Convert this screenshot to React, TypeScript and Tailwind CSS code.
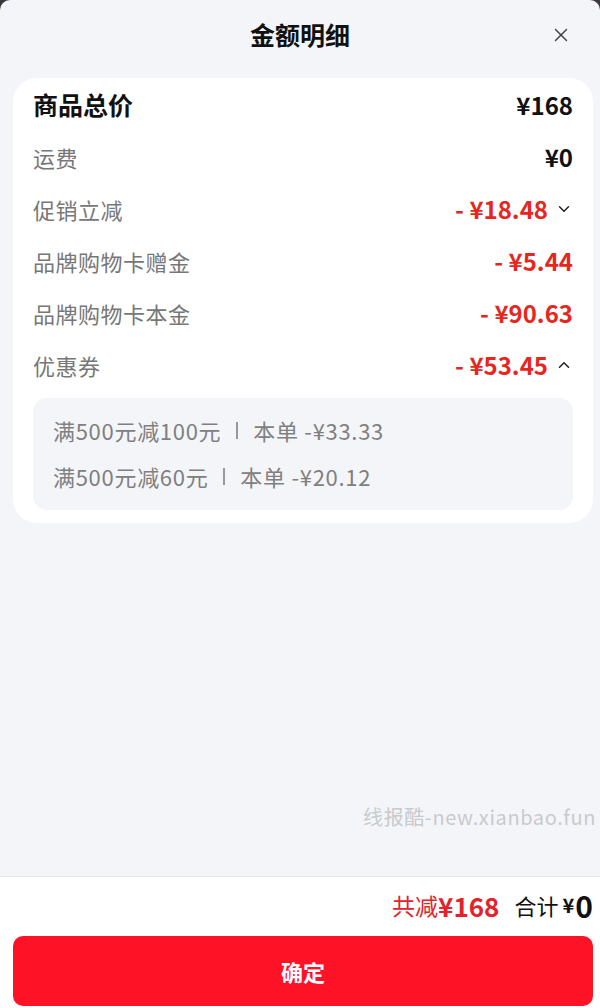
import { ChevronDown, ChevronUp, X } from "lucide-react";

const font = { fontFamily: '"Noto Sans CJK SC", "Noto Sans", sans-serif' };

type Row = {
  label: string;
  value: string;
  red?: boolean;
  arrow?: "down" | "up";
};

const rows: Row[] = [
  { label: "运费", value: "¥0" },
  { label: "促销立减", value: "- ¥18.48", red: true, arrow: "down" },
  { label: "品牌购物卡赠金", value: "- ¥5.44", red: true },
  { label: "品牌购物卡本金", value: "- ¥90.63", red: true },
  { label: "优惠券", value: "- ¥53.45", red: true, arrow: "up" },
];

const coupons = [
  { rule: "满500元减100元", amount: "本单 -¥33.33" },
  { rule: "满500元减60元", amount: "本单 -¥20.12" },
];

export default function App() {
  return (
    <div className="bg-[#3a3a3a] h-[1008px] w-[600px]" style={font}>
      <div className="flex h-full flex-col overflow-hidden rounded-t-[10px] bg-[#f4f5f8]">
        {/* Header */}
        <div className="relative flex h-[72px] items-center justify-center pb-[2px]">
          <h1 className="text-[25px] font-bold text-[#111]">金额明细</h1>
          <X className="absolute right-[28px] top-[24px] h-[22px] w-[22px] text-[#444]" strokeWidth={1.6} />
        </div>

        {/* Card */}
        <div className="ml-[13px] mr-[7px] mt-[6px] rounded-[24px] bg-white pb-[13px] pl-[20px] pr-[20px] pt-[10px]">
          <div className="flex h-[34px] items-center justify-between">
            <span className="text-[25px] font-bold text-[#111]">商品总价</span>
            <span className="text-[24px] font-bold text-[#111]">¥168</span>
          </div>
          {rows.map((r) => (
            <div key={r.label} className="mt-[18px] flex h-[34px] items-center justify-between">
              <span className="text-[22px] tracking-[0.5px] text-[#777]">{r.label}</span>
              <div className="flex items-center">
                <span
                  className={
                    r.red
                      ? "text-[24px] font-bold text-[#e6271f]"
                      : "text-[24px] font-bold text-[#111]"
                  }
                >
                  {r.value}
                </span>
                {r.arrow === "down" && (
                  <ChevronDown className="ml-[7px] h-[18px] w-[18px] text-[#222]" strokeWidth={2} />
                )}
                {r.arrow === "up" && (
                  <ChevronUp className="ml-[7px] h-[18px] w-[18px] text-[#222]" strokeWidth={2} />
                )}
              </div>
            </div>
          ))}

          <div className="mt-[16px] rounded-[14px] bg-[#f4f5f8] px-[20px] pb-[18px] pt-[16px]">
            {coupons.map((c, i) => (
              <div
                key={c.rule}
                className={
                  i === 0
                    ? "flex h-[32px] items-center text-[22px] tracking-[0.7px] text-[#808080]"
                    : "mt-[14px] flex h-[32px] items-center text-[22px] tracking-[0.7px] text-[#808080]"
                }
              >
                <span>{c.rule}</span>
                <span className="mx-[15px] h-[17px] w-[2px] bg-[#999]" />
                <span>{c.amount}</span>
              </div>
            ))}
          </div>
        </div>

        <div className="flex-1" />

        {/* Watermark */}
        <div className="mb-[44px] pr-[4px] text-right text-[20px] tracking-[0.6px] text-[#c8cacd]">
          线报酷-new.xianbao.fun
        </div>

        {/* Footer */}
        <div className="border-t border-[#e6e7ea] bg-white pb-[2px] pl-[13px] pr-[7px] pt-[8px]">
          <div className="flex h-[40px] items-center justify-end">
            <span className="text-[23px] text-[#e4222c]">共减</span>
            <span className="text-[26px] font-semibold text-[#e4222c]">¥168</span>
            <span className="ml-[15px] text-[22px] text-[#111]">合计</span>
            <span className="ml-[4px] text-[20px] font-semibold text-[#111]">¥</span>
            <span className="ml-[1px] text-[30px] font-semibold leading-none text-[#111]">0</span>
          </div>
          <button className="mt-[11px] flex h-[70px] w-full items-center justify-center rounded-[10px] bg-[#fe1226] text-[22px] font-bold text-white">
            确定
          </button>
        </div>
      </div>
    </div>
  );
}
